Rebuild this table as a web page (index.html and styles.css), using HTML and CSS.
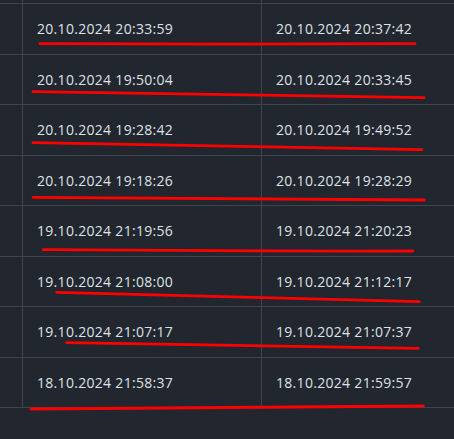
FILE: index.html
```
<!DOCTYPE html>
<html>
<head>
    <title>Sessions</title>
    <link rel="stylesheet" href="styles.css">
</head>
<body>
    <div class="page">
        <table class="sessions">
            <tr class="cut-row">
                <td class="idx"></td>
                <td></td>
                <td></td>
            </tr>
            <tr><td class="idx"></td><td>20.10.2024 20:33:59</td><td>20.10.2024 20:37:42</td></tr>
            <tr><td class="idx"></td><td>20.10.2024 19:50:04</td><td>20.10.2024 20:33:45</td></tr>
            <tr><td class="idx"></td><td>20.10.2024 19:28:42</td><td>20.10.2024 19:49:52</td></tr>
            <tr><td class="idx"></td><td>20.10.2024 19:18:26</td><td>20.10.2024 19:28:29</td></tr>
            <tr><td class="idx"></td><td>19.10.2024 21:19:56</td><td>19.10.2024 21:20:23</td></tr>
            <tr><td class="idx"></td><td>19.10.2024 21:08:00</td><td>19.10.2024 21:12:17</td></tr>
            <tr><td class="idx"></td><td>19.10.2024 21:07:17</td><td>19.10.2024 21:07:37</td></tr>
            <tr><td class="idx"></td><td>18.10.2024 21:58:37</td><td>18.10.2024 21:59:57</td></tr>
        </table>

        <!-- hand drawn marks over the rows -->
        <svg class="marks" width="454" height="439" viewBox="0 0 454 439">
            <path d="M40 43.7 Q228 44.6 415 43.7"/>
            <path d="M33 91.7 Q230 95 424 97.7"/>
            <path d="M33 142.7 Q230 146.5 421.7 149.7"/>
            <path d="M33 197.3 Q230 199.5 424.3 200"/>
            <path d="M43.3 249.7 Q261 251.3 412.7 251"/>
            <path d="M56.7 292.3 Q240 297.5 419.3 301.7"/>
            <path d="M66.7 342.7 Q240 345.8 418.3 348.3"/>
            <path d="M31 409 Q230 407.5 423.3 406"/>
        </svg>
    </div>
</body>
</html>
```

FILE: styles.css
```
body {
    margin: 0;
    background: #22262e;
    font-family: "Open Sans", "Noto Sans", sans-serif;
    font-size: 14px;
    color: #dee2e6;
}
.page {
    position: relative;
    width: 454px;
    height: 439px;
    overflow: hidden;
}
.sessions {
    border-collapse: collapse;
    width: 480px;
    table-layout: fixed;
}
.sessions td {
    border: 1px solid #40444c;
    height: 49.5px;
    padding: 0 0 0 14px;
    vertical-align: middle;
    white-space: nowrap;
    line-height: 21px;
    letter-spacing: 0.3px;
}
.sessions td:first-child {
    border-left: none;
}
.sessions td.idx {
    width: 22px;
    padding: 0;
}
.sessions td:nth-child(2) {
    width: 224px;
}
.sessions tr.cut-row td {
    height: 3px;
    border-top: none;
}
.marks {
    position: absolute;
    top: 0;
    left: 0;
    pointer-events: none;
}
.marks path {
    fill: none;
    stroke: #ff0000;
    stroke-width: 2.8;
    stroke-linecap: round;
}
```
